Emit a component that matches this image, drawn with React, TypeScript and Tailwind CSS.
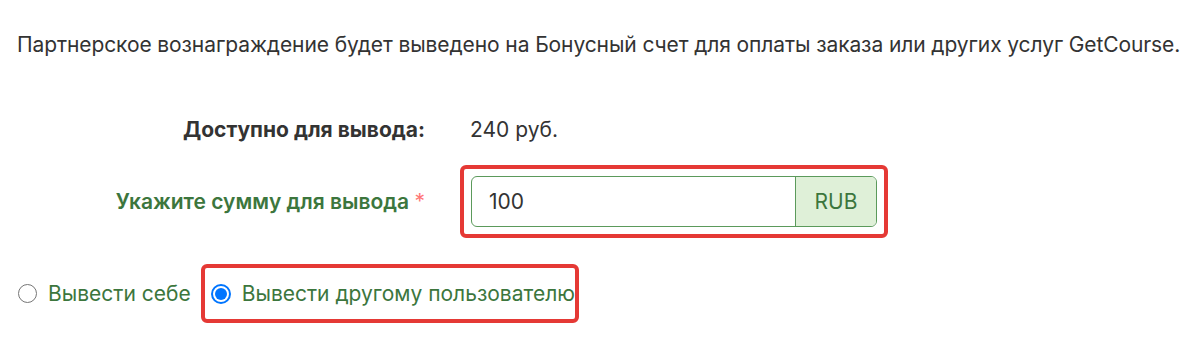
import React from "react";

export default function App() {
  return (
    <div className="w-[1200px] h-[343px] bg-white text-[#333] font-['Inter',sans-serif] text-[21px] overflow-hidden">
      <div className="pl-[17px] pt-[31px] leading-[28px] tracking-[-0.1px] whitespace-nowrap">
        Партнерское вознаграждение будет выведено на Бонусный счет для оплаты заказа или других услуг GetCourse.
      </div>
      <div className="mt-[57px] grid grid-cols-[425px_1fr] gap-x-[35px] items-center">
        <div className="text-right font-bold leading-[28px]">Доступно для вывода:</div>
        <div className="pl-[10px] leading-[28px]">240 руб.</div>
        <div className="text-right font-semibold text-[#3c763d] leading-[28px] mt-[21px]">
          Укажите сумму для вывода <span className="text-[#f77] font-normal">*</span>
        </div>
        <div className="mt-[21px]">
          <div className="w-[428px] h-[73px] border-4 border-[#e53935] rounded-[6px] p-[7px]">
            <div className="flex h-full border border-[#5b9a5b] rounded-[6px] overflow-hidden">
              <div className="flex-1 flex items-center pl-[17px] text-[#333]">100</div>
              <div className="w-[81px] flex items-center justify-center bg-[#dff0d8] border-l border-[#5b9a5b] text-[#3c763d]">RUB</div>
            </div>
          </div>
        </div>
      </div>
      <div className="mt-[26px] flex items-center pl-[18px] text-[#3c763d] whitespace-nowrap">
        <label className="flex items-center">
          <span className="w-[19px] h-[19px] rounded-full border-[1.5px] border-[#767676] bg-white" />
          <span className="ml-[11px]">Вывести себе</span>
        </label>
        <div className="ml-[10px] w-[378px] shrink-0 h-[59px] border-4 border-[#e53935] rounded-[6px] flex items-center pl-[6px]">
          <span className="w-[20px] h-[20px] shrink-0 rounded-full border-2 border-[#0075ff] flex items-center justify-center">
            <span className="w-[12px] h-[12px] rounded-full bg-[#0075ff]" />
          </span>
          <span className="ml-[11px]">Вывести другому пользователю</span>
        </div>
      </div>
    </div>
  );
}
